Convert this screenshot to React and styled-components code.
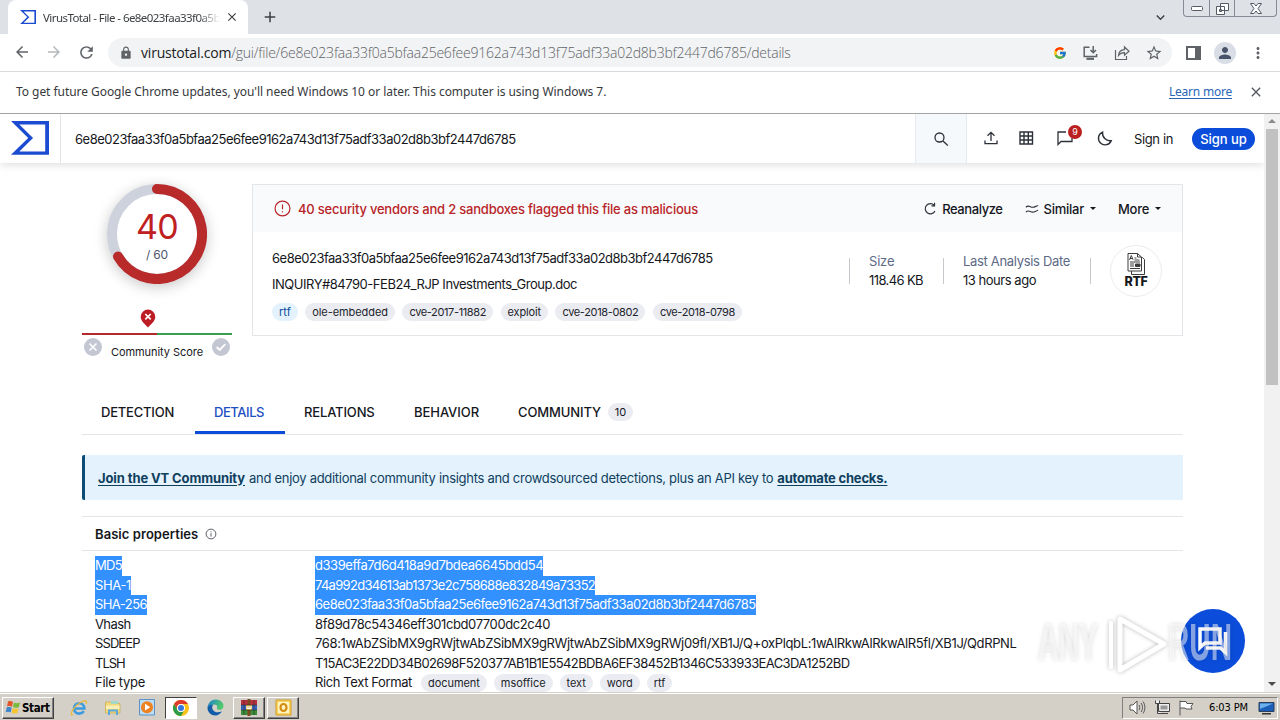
import styled, { createGlobalStyle } from 'styled-components';
import {
  MdArrowBack,
  MdArrowForward,
  MdRefresh,
  MdLock,
  MdStarBorder,
  MdPerson,
  MdMoreVert,
  MdClose,
  MdAdd,
  MdKeyboardArrowDown,
} from 'react-icons/md';
import { FcGoogle } from 'react-icons/fc';

const GlobalStyle = createGlobalStyle`
  * {
    box-sizing: border-box;
  }
  body {
    margin: 0;
    overflow: hidden;
    font-family: 'Inter', 'Liberation Sans', sans-serif;
    color: #15171c;
  }
  svg {
    display: block;
    flex: none;
  }
`;

const Screen = styled.div`
  position: relative;
  width: 1280px;
  height: 720px;
  display: flex;
  flex-direction: column;
  overflow: hidden;
  background: #fff;
`;

/* Any run of text; $ls tightens the tracking */
const Text = styled.span`
  white-space: nowrap;
  font-size: ${(p) => p.$size || 13}px;
  font-weight: ${(p) => p.$weight || 400};
  letter-spacing: ${(p) => p.$ls || 0}px;
  color: ${(p) => p.$color || 'inherit'};
`;

/* ---------- browser chrome ---------- */

const TabStrip = styled.div`
  height: 34px;
  flex: none;
  display: flex;
  align-items: flex-end;
  background: #dee1e6;
  font-family: 'Noto Sans', sans-serif;
  color: #3c4043;
`;

const BrowserTab = styled.div`
  width: 240px;
  height: 34px;
  margin-left: 8px;
  padding: 0 8px 0 12px;
  display: flex;
  align-items: center;
  background: #fff;
  border-radius: 8px 8px 0 0;
`;

const TabTitle = styled.div`
  width: 177px;
  margin: 0 5px 0 7px;
  font-size: 11.5px;
  letter-spacing: -0.56px;
  white-space: nowrap;
  mask-image: linear-gradient(90deg, #000 88%, transparent);
`;

const NewTab = styled.div`
  height: 34px;
  margin-left: 13px;
  flex: 1;
  display: flex;
  align-items: center;
`;

const TabSearch = styled.div`
  height: 34px;
  margin-right: 14px;
  display: flex;
  align-items: center;
`;

const WindowButtons = styled.div`
  align-self: flex-start;
  height: 17px;
  margin-right: 3px;
  display: flex;
  border: 1px solid #858a94;
  border-top: none;
  border-radius: 0 0 4px 4px;
`;

const WindowButton = styled.div`
  width: ${(p) => p.$w}px;
  display: flex;
  align-items: center;
  justify-content: center;
  border-left: ${(p) => (p.$first ? 'none' : '1px solid #858a94')};
`;

const Toolbar = styled.div`
  height: 38px;
  flex: none;
  display: flex;
  align-items: center;
  padding: 0 13px;
  border-bottom: 1px solid #d8dadd;
  color: #5f6368;
`;

const NavIcons = styled.div`
  width: 95px;
  display: flex;
  gap: 14px;
`;

const Omnibox = styled.div`
  width: 1064px;
  height: 29px;
  padding: 0 9px 0 11px;
  display: flex;
  align-items: center;
  background: #f1f3f4;
  border-radius: 15px;
  font-family: 'Open Sans', sans-serif;
`;

const Url = styled.div`
  flex: 1;
  margin-left: 8px;
  display: flex;
`;

const OmniActions = styled.div`
  display: flex;
  align-items: center;
  gap: 14px;
`;

const ToolbarActions = styled.div`
  flex: 1;
  display: flex;
  align-items: center;
  justify-content: space-between;
  padding-left: 14px;
`;

const Avatar = styled.div`
  width: 22px;
  height: 22px;
  display: flex;
  align-items: center;
  justify-content: center;
  border-radius: 50%;
  background: #d9dde5;
  color: #47536b;
`;

const InfoBar = styled.div`
  height: 42px;
  flex: none;
  display: flex;
  align-items: center;
  padding: 0 16px 2px 16px;
  border-bottom: 1px solid #a3a3a3;
  font-family: 'Noto Sans', sans-serif;
  color: #37393d;
`;

const LearnMore = styled.a`
  margin: 0 16px 0 auto;
  font-size: 12px;
  letter-spacing: -0.22px;
  color: #2a66b8;
  text-decoration: underline;
  text-underline-offset: 2px;
`;

/* ---------- page ---------- */

const Viewport = styled.div`
  height: 578px;
  flex: none;
  display: flex;
`;

const Page = styled.div`
  width: 1264px;
  overflow: hidden;
`;

const Scrollbar = styled.div`
  width: 16px;
  padding: 4px 0 5px;
  display: flex;
  flex-direction: column;
  align-items: center;
  background: #f1f1f1;
`;

const Thumb = styled.div`
  width: 12px;
  height: 256px;
  margin-top: 5px;
  margin-bottom: auto;
  background: #c1c1c1;
`;

const Header = styled.div`
  height: 49px;
  display: flex;
  box-shadow: 0 2px 8px rgba(0, 0, 0, 0.13);
`;

const LogoBox = styled.div`
  width: 61px;
  padding: 7px 0 0 11px;
  border-right: 1px solid #e3e5ea;
`;

const SearchText = styled.div`
  width: 854px;
  padding-left: 14px;
  display: flex;
  align-items: center;
`;

const SearchButton = styled.div`
  width: 52px;
  display: flex;
  align-items: center;
  justify-content: center;
  padding-right: 1px;
  background: #f6f9fc;
  border: 1px solid #e6e9ed;
  border-width: 0 1px;
`;

const HeaderActions = styled.div`
  flex: 1;
  display: flex;
  align-items: center;
  padding-left: 16px;
`;

const IconGroup = styled.div`
  display: flex;
  gap: 19px;
  margin-right: 21px;
`;

const Notification = styled.div`
  position: relative;
  margin: 0 4px;
`;

const Badge = styled.span`
  position: absolute;
  left: 11px;
  top: -5px;
  width: 14px;
  height: 14px;
  border-radius: 50%;
  background: #b9201f;
  color: #fff;
  font-size: 9px;
  line-height: 14px;
  text-align: center;
`;

const SignUp = styled.div`
  width: 63px;
  height: 22px;
  margin-left: 19px;
  border-radius: 11px;
  background: #0b4dda;
  color: #fff;
  display: flex;
  align-items: center;
  justify-content: center;
`;

const Main = styled.div`
  width: 1101px;
  margin-left: 82px;
`;

const Summary = styled.div`
  height: 226px;
  padding-top: 21px;
  display: flex;
  gap: 20px;
`;

const ScoreColumn = styled.div`
  width: 150px;
  display: flex;
  flex-direction: column;
  align-items: center;
`;

const Gauge = styled.div`
  width: 100px;
  height: 100px;
  display: grid;
  place-items: center;
  border-radius: 50%;
  box-shadow: 0 3px 14px rgba(0, 0, 0, 0.22);
  & > * {
    grid-area: 1 / 1;
  }
`;

const GaugeLabel = styled.div`
  display: flex;
  flex-direction: column;
  align-items: center;
  color: #c0201f;
`;

const Pin = styled.div`
  margin: 25px 19px 0 0;
`;

const ScoreBar = styled.div`
  width: 150px;
  height: 2px;
  margin-top: 5px;
  background: linear-gradient(90deg, #b3282b 50%, #3a9e52 50%);
`;

const ScoreRow = styled.div`
  width: 150px;
  padding: 3px 2px 0;
  display: flex;
  justify-content: space-between;
  & > span {
    padding-top: 7px;
  }
`;

const Card = styled.div`
  width: 931px;
  height: 152px;
  border: 1px solid #e3e5e9;
`;

const CardHead = styled.div`
  height: 47px;
  padding: 0 21px;
  display: flex;
  align-items: center;
  background: #f8fafc;
`;

const Alert = styled.div`
  flex: 1;
  display: flex;
  align-items: center;
  gap: 7px;
  color: #b82528;
`;

const CardActions = styled.div`
  display: flex;
  gap: 22px;
`;

const CardAction = styled.div`
  display: flex;
  align-items: center;
  gap: 5px;
`;

const Caret = styled.i`
  margin-left: 1px;
  border: 3px solid transparent;
  border-top-color: #15171c;
  border-bottom: none;
`;

const CardBody = styled.div`
  display: flex;
  padding: 13px 20px 0 19px;
`;

const FileInfo = styled.div`
  width: 577px;
  & > span {
    display: block;
    height: 26px;
    line-height: 26px;
  }
`;

const Tags = styled.div`
  display: flex;
  align-items: center;
  gap: ${(p) => p.$gap || 7}px;
  margin-top: ${(p) => p.$top || 0}px;
  margin-left: ${(p) => p.$left || 0}px;
`;

const Tag = styled.span`
  height: 18px;
  padding: 0 7px;
  border-radius: 9px;
  background: ${(p) => (p.$blue ? '#e3f2fd' : '#ebecf2')};
  color: ${(p) => (p.$blue ? '#0b4d9a' : '#21242c')};
  font-size: 11px;
  line-height: 18px;
  letter-spacing: ${(p) => p.$ls || 0}px;
  white-space: nowrap;
`;

const Stat = styled.div`
  width: ${(p) => p.$w}px;
  height: 26px;
  margin-top: 13px;
  padding-left: 19px;
  display: flex;
  flex-direction: column;
  justify-content: center;
  border-left: 1px solid #c6c8ce;
  line-height: 19px;
  & > span:first-child {
    color: #5d6a86;
  }
`;

const FileBadge = styled.div`
  width: 52px;
  height: 52px;
  display: flex;
  flex-direction: column;
  align-items: center;
  padding-top: 7px;
  border: 1px solid #ededf0;
  border-radius: 50%;
  font-size: 12.5px;
  font-weight: 800;
  line-height: 14px;
  letter-spacing: -0.3px;
`;

const Tabs = styled.div`
  height: 46px;
  display: flex;
  border-bottom: 1px solid #e3e5e9;
`;

const Tab = styled.div`
  width: ${(p) => p.$w}px;
  padding: 3px 0 0 19px;
  display: flex;
  align-items: center;
  color: ${(p) => (p.$active ? '#1d4fc4' : 'inherit')};
  border-bottom: 3px solid ${(p) => (p.$active ? '#0b4dda' : 'transparent')};
`;

const Count = styled.span`
  width: 25px;
  height: 18px;
  margin-left: 7px;
  border-radius: 9px;
  background: #ebecf2;
  font-size: 11px;
  line-height: 18px;
  text-align: center;
`;

const Banner = styled.div`
  height: 45px;
  margin-top: 20px;
  padding-left: 13px;
  display: flex;
  align-items: center;
  gap: 4px;
  background: #e3f2fd;
  border-left: 3px solid #0b4d75;
  border-radius: 2px 0 0 2px;
  color: #103f5e;
`;

const BannerLink = styled.a`
  font-size: 13px;
  font-weight: 700;
  letter-spacing: ${(p) => p.$ls}px;
  white-space: nowrap;
  text-decoration: underline;
  text-underline-offset: 2px;
`;

const SectionTitle = styled.div`
  height: 35px;
  margin-top: 16px;
  padding-left: 13px;
  display: flex;
  align-items: center;
  gap: 7px;
  border: 1px solid #e3e5e9;
  border-width: 1px 0;
`;

const Properties = styled.div`
  padding: 5px 0 0 13px;
`;

const Row = styled.div`
  height: 19.5px;
  display: grid;
  grid-template-columns: 220px 1fr;
  align-items: center;
`;

const Cell = styled.div`
  display: flex;
  align-items: center;
`;

const Value = styled(Text)`
  line-height: 19.5px;
  background: ${(p) => (p.$selected ? '#3390ff' : 'none')};
  color: ${(p) => (p.$selected ? '#fff' : 'inherit')};
`;

/* ---------- overlays ---------- */

const ChatButton = styled.div`
  position: absolute;
  left: 1181px;
  top: 609px;
  width: 64px;
  height: 64px;
  display: grid;
  place-items: center;
  border-radius: 50%;
  background: #0b4dda;
`;

const Watermark = styled.div`
  position: absolute;
  left: 1030px;
  top: 600px;
  filter: drop-shadow(0 0 2px rgba(0, 0, 0, 0.28));
`;

/* ---------- taskbar ---------- */

const Taskbar = styled.div`
  height: 28px;
  flex: none;
  display: flex;
  align-items: center;
  padding: 2px 2px 0;
  background: #d4d0c8;
  border-top: 1px solid #d4d0c8;
  box-shadow: inset 0 1px #fff;
`;

const StartButton = styled.div`
  width: 52px;
  height: 22px;
  padding-left: 2px;
  display: flex;
  align-items: center;
  gap: 1px;
  border: 1px solid;
  border-color: #fff #404040 #404040 #fff;
  box-shadow: inset -1px -1px #808080;
  font: 700 11.5px 'DejaVu Sans Condensed', 'DejaVu Sans', sans-serif;
  letter-spacing: -0.35px;
  color: #000;
`;

const QuickLaunch = styled.div`
  display: flex;
  gap: 2px;
  margin-left: 9px;
`;

const TaskButton = styled.div`
  width: 32px;
  height: 22px;
  display: grid;
  place-items: center;
  border: 1px solid;
  border-color: ${(p) =>
    p.$pressed ? '#404040 #fff #fff #404040' : p.$raised ? '#fff #404040 #404040 #fff' : 'transparent'};
  box-shadow: ${(p) => (p.$raised ? 'inset -1px -1px #808080' : 'none')};
  background: ${(p) => (p.$pressed ? '#fff' : 'none')};
`;

const Tray = styled.div`
  width: 156px;
  height: 22px;
  margin-left: auto;
  padding: 0 2px 0 6px;
  display: flex;
  align-items: center;
  gap: 8px;
  border: 1px solid;
  border-color: #808080 #fff #fff #808080;
  color: #000;
`;

const Clock = styled.span`
  margin: 0 2px 0 auto;
  font: 11px 'DejaVu Sans Condensed', 'DejaVu Sans', sans-serif;
  letter-spacing: -0.12px;
`;

/* ---------- icons ---------- */

const VtLogo = ({ width }) => (
  <svg width={width} height={width * 0.89} viewBox="0 1.32 24 21.36" fill="#1a4bd0">
    <path d="M10.87 12L0 22.68h24V1.32H0zm10.73 8.52H5.28l8.637-8.448L5.28 3.48H21.6z" />
  </svg>
);

const Stroke = ({ size = 16, w = 1.3, color = '#2d3139', children }) => (
  <svg width={size} height={size} viewBox="0 0 16 16" fill="none" stroke={color} strokeWidth={w}>
    {children}
  </svg>
);

const InstallIcon = () => (
  <svg width="18" height="18" viewBox="0 0 18 18" fill="none" stroke="#5f6368" strokeWidth="1.5">
    <path d="M8.500 3.200H3.200v9.300h12.400V10M12.200 2v6.500M9.500 6l2.700 2.700L15 6" />
    <path d="M5.500 14.800h7.500" strokeWidth="2.200" />
  </svg>
);

const ShareIcon = () => (
  <svg width="18" height="18" viewBox="0 0 18 18" fill="none" stroke="#5f6368" strokeWidth="1.2">
    <path d="M2.5 6v9.5h11V12M5.5 11.5c.3-4 2.6-5.7 6-5.8V3l4.5 4.2-4.5 4V8.700c-2.800-.1-4.500.7-6 2.800z" />
  </svg>
);

const Winrar = () => (
  <svg width="18" height="17" viewBox="0 0 18 17">
    <path fill="#b8303f" d="M1 1h16v5H1z" />
    <path fill="#3a63b5" d="M1 6h16v5H1z" />
    <path fill="#3d8b3b" d="M1 11h16v5H1z" />
    <path fill="#7b4a23" d="M7.500 0h3v17h-3z" />
    <path fill="#d9b24c" d="M6 6h6v5H6z" />
    <path stroke="#fff" fill="none" d="M7 7v2.500h4V7M9 7v2.500" />
    <path stroke="#222" strokeWidth=".8" d="M1 6h16M1 11h16M4 1v15M14 1v15" opacity=".6" />
  </svg>
);

const ChromeLogo = () => (
  <svg width="16" height="16" viewBox="0 0 16 16">
    <circle cx="8" cy="8" r="8" fill="#f9c31b" />
    <path fill="#de3b2f" d="M1.070 4A8 8 0 0 1 14.930 4L8 4A4 4 0 0 0 4.500 10z" />
    <path fill="#2c9c4a" d="M1.070 4A8 8 0 0 0 8 16L11.500 10A4 4 0 0 1 4.540 10z" />
    <circle cx="8" cy="8" r="4" fill="#fff" />
    <circle cx="8" cy="8" r="3" fill="#3576e0" />
  </svg>
);

const EdgeLogo = () => (
  <svg width="17" height="17" viewBox="0 0 17 17">
    <defs>
      <linearGradient id="edge" x1="0" y1="0" x2="1" y2=".3">
        <stop offset="0" stopColor="#1a7fd0" />
        <stop offset="1" stopColor="#52c96b" />
      </linearGradient>
    </defs>
    <path
      fill="url(#edge)"
      d="M.5 8.500C1 4 4.500.500 8.700.500c4.500 0 7.800 3 7.800 6.400 0 2.400-1.800 3.900-4 3.900-2 0-3-.7-2.600-1.500.8-1.500.2-3.700-2.400-3.800C4 5.400 1.500 7 .5 8.500z"
    />
    <path fill="#135ca8" d="M.5 8.500C1.500 6.500 3.500 5.300 6.500 5.400 5 6.500 4.700 9 6 11c1.800 2.700 5.600 3 8.900 1.300C13.500 15 11 16.500 8.400 16.500 4 16.500.3 13 .5 8.500z" />
  </svg>
);

const IeLogo = () => (
  <svg width="18" height="18" viewBox="0 0 18 18" fill="none">
    <path stroke="#3c9be0" strokeWidth="2.600" d="M4 9.500h10.300C14.300 6 12 4.300 9.300 4.300 6.300 4.300 4 6.500 4 9.600c0 3 2.300 5 5.200 5 2 0 3.700-.9 4.600-2.400" />
    <path stroke="#e6b93a" strokeWidth="1.300" d="M3 15.500C.5 17 .5 14 3.500 9.800 7 5 13 1.200 15.800 2c1 .3.900 1.700.2 3" />
  </svg>
);

const FolderLogo = () => (
  <svg width="18" height="17" viewBox="0 0 18 17">
    <path fill="#f2d87c" stroke="#c9a94a" strokeWidth=".7" d="M1.500 3h5l1 1.500h8.500V14h-14.500z" />
    <path fill="#a5d8c8" d="M7 2h7v3H7z" />
    <path fill="#fbeeb4" d="M2 6.500h13.500V10H2z" />
    <path fill="none" stroke="#5aa7dc" strokeWidth="2" d="M5 16v-4.500h8V16" />
  </svg>
);

const PlayerLogo = () => (
  <svg width="16" height="17" viewBox="0 0 16 17">
    <path fill="#bddcf3" stroke="#5b92c7" d="M.500.500h15v15.500H.500z" />
    <circle cx="8" cy="8.200" r="6" fill="#ee8120" />
    <path fill="#fff" d="M6 4.800l5.200 3.400L6 11.600z" />
  </svg>
);

const OutlookLogo = () => (
  <svg width="17" height="17" viewBox="0 0 17 17">
    <path fill="#f8d560" stroke="#d39a1f" d="M1 1h15v15H1z" />
    <path fill="#fff3c4" d="M3 3h11v11H3z" />
    <ellipse cx="8.500" cy="8.500" rx="3" ry="3.500" fill="none" stroke="#d48c10" strokeWidth="2.200" />
  </svg>
);

const WindowsLogo = () => (
  <svg width="16" height="15" viewBox="0 0 16 15">
    <path fill="#e2562a" d="M3 1.500C5 .6 6.500 1 8 2L7 6.800C5.400 5.800 4 5.700 2 6.400z" />
    <path fill="#79b93c" d="M9 2.400c1.800 1 3.500 1 6 0L13.800 7.200c-2 .8-4 .7-5.800-.2z" />
    <path fill="#3d86cf" d="M1.700 7.500c2-.8 3.500-.6 5 .3L5.700 12.500c-1.500-1-3-1.100-5-.3z" />
    <path fill="#f5c431" d="M7.700 8.100c1.800 1 3.700 1 5.800.2l-1.200 4.700c-2 .8-3.900.7-5.700-.3z" />
  </svg>
);

const RtfIcon = () => (
  <svg width="18" height="22" viewBox="0 0 18 22" fill="#fff" stroke="#3c3c3c" strokeWidth="1">
    <path d="M4.500 4.500h11l2 2V21.500h-13z" />
    <path d="M1 .500h9.500l4 3.500V18H1z" />
    <path d="M10.500.500V4h4M2.500 6.800L4.300 2.500l1.800 4.300M3 5.500h2.600M7.500 5h2M7.500 7h5M3 9h10M3 11h4M3 13h4M3 15.500h10" fill="none" />
    <path d="M8.500 11h4.500v2.500H8.500z" fill="#3c3c3c" />
  </svg>
);

const rows = [
  { label: 'MD5', value: 'd339effa7d6d418a9d7bdea6645bdd54', ls: -0.44, labelLs: -0.7, selected: true },
  { label: 'SHA-1', value: '74a992d34613ab1373e2c758688e832849a73352', ls: -0.7, labelLs: -0.35, selected: true },
  {
    label: 'SHA-256',
    value: '6e8e023faa33f0a5bfaa25e6fee9162a743d13f75adf33a02d8b3bf2447d6785',
    ls: -0.5,
    labelLs: -0.57,
    selected: true,
  },
  { label: 'Vhash', value: '8f89d78c54346eff301cbd07700dc2c40', ls: -0.4, labelLs: -0.6 },
  {
    label: 'SSDEEP',
    value:
      '768:1wAbZSibMX9gRWjtwAbZSibMX9gRWjtwAbZSibMX9gRWj09fl/XB1J/Q+oxPlqbL:1wAlRkwAlRkwAlR5fl/XB1J/QdRPNL',
    ls: -0.37,
    labelLs: -0.9,
  },
  {
    label: 'TLSH',
    value: 'T15AC3E22DD34B02698F520377AB1B1E5542BDBA6EF38452B1346C533933EAC3DA1252BD',
    ls: -0.61,
    labelLs: -1,
  },
  {
    label: 'File type',
    value: 'Rich Text Format',
    ls: -0.39,
    labelLs: -0.28,
    tags: ['document', 'msoffice', 'text', 'word', 'rtf'],
  },
];

const hash = '6e8e023faa33f0a5bfaa25e6fee9162a743d13f75adf33a02d8b3bf2447d6785';

const Browser = () => (
  <>
    <TabStrip>
      <BrowserTab>
        <VtLogo width={16} />
        <TabTitle>VirusTotal - File - 6e8e023faa33f0a5b</TabTitle>
        <MdClose size={14} />
      </BrowserTab>
      <NewTab>
        <MdAdd size={18} />
      </NewTab>
      <TabSearch>
        <MdKeyboardArrowDown size={17} />
      </TabSearch>
      <WindowButtons>
        <WindowButton $w={25} $first>
          <svg width="12" height="6" viewBox="0 0 12 6">
            <rect x=".5" y="1.500" width="11" height="4" rx="1" fill="#fff" stroke="#555b66" />
          </svg>
        </WindowButton>
        <WindowButton $w={25}>
          <svg width="13" height="13" viewBox="0 0 13 13" fill="#fff" stroke="#555b66">
            <path d="M4.500 1.500h8v7h-8zM.500 4.500h8v8h-8zM3.500 7.500h2v2h-2z" />
          </svg>
        </WindowButton>
        <WindowButton $w={42}>
          <svg width="12" height="11" viewBox="0 0 12 11" fill="#fff" stroke="#555b66">
            <path d="M.500.500h3.500L6 3 8 .500h3.500L8 5.500l3.500 5H8L6 8l-2 2.500H.500L4 5.500z" />
          </svg>
        </WindowButton>
      </WindowButtons>
    </TabStrip>

    <Toolbar>
      <NavIcons>
        <MdArrowBack size={18} />
        <MdArrowForward size={18} color="#b5b8bb" />
        <MdRefresh size={19} />
      </NavIcons>
      <Omnibox>
        <MdLock size={14} />
        <Url>
          <Text $size={14} $ls={-0.2} $color="#202124">
            virustotal.com
          </Text>
          <Text $size={14} $weight={300} $ls={-0.23}>
            /gui/file/{hash}/details
          </Text>
        </Url>
        <OmniActions>
          <FcGoogle size={14} />
          <InstallIcon />
          <ShareIcon />
          <MdStarBorder size={18} />
        </OmniActions>
      </Omnibox>
      <ToolbarActions>
        <svg width="15" height="14" viewBox="0 0 15 14">
          <path fill="none" stroke="#5f6368" strokeWidth="2" d="M1 1h13v12H1z" />
          <path fill="#5f6368" d="M9 1h5v12H9z" />
        </svg>
        <Avatar>
          <MdPerson size={18} />
        </Avatar>
        <MdMoreVert size={18} />
      </ToolbarActions>
    </Toolbar>

    <InfoBar>
      <Text $size={12} $ls={-0.05}>
        To get future Google Chrome updates, you'll need Windows 10 or later. This computer is using Windows 7.
      </Text>
      <LearnMore>Learn more</LearnMore>
      <MdClose size={16} color="#55585c" />
    </InfoBar>
  </>
);

const PageHeader = () => (
  <Header>
    <LogoBox>
      <VtLogo width={38} />
    </LogoBox>
    <SearchText>
      <Text $ls={-0.5}>{hash}</Text>
    </SearchText>
    <SearchButton>
      <Stroke>
        <circle cx="6.500" cy="6.500" r="4.500" />
        <path d="M10 10l4.800 4.500" />
      </Stroke>
    </SearchButton>
    <HeaderActions>
      <IconGroup>
        <Stroke>
          <path d="M8 11V2.500M4.500 5.800L8 2.300l3.500 3.500M2 10.500v3.200h12v-3.200" />
        </Stroke>
        <Stroke w={1.4}>
          <path d="M2 2h12.500v12H2zM6 2v12M10.300 2v12M2 6h12.500M2 10h12.500" />
        </Stroke>
        <Notification>
          <Stroke>
            <path d="M9 2H1v12.500l3-3h11V8" />
          </Stroke>
          <Badge>9</Badge>
        </Notification>
        <Stroke size={17}>
          <path d="M6.200 2A6.200 6.200 0 1 0 14.300 10 7 7 0 0 1 6.200 2z" />
        </Stroke>
      </IconGroup>
      <Text $ls={-0.38}>Sign in</Text>
      <SignUp>
        <Text $weight={500} $ls={-0.05}>
          Sign up
        </Text>
      </SignUp>
    </HeaderActions>
  </Header>
);

const Score = () => (
  <ScoreColumn>
    <Gauge>
      <svg width="100" height="100" viewBox="0 0 100 100" fill="none" strokeWidth="10">
        <circle cx="50" cy="50" r="45" fill="#fff" stroke="#ced2dc" />
        <path d="M50 5a45 45 0 1 1 -38.970 67.500" stroke="#b92a2b" strokeLinecap="round" />
      </svg>
      <GaugeLabel>
        <Text $size={34} $ls={-0.7}>
          40
        </Text>
        <Text $size={12} $ls={-0.18} $color="#4d586e">
          / 60
        </Text>
      </GaugeLabel>
    </Gauge>
    <Pin>
      <svg width="16" height="19" viewBox="0 0 16 19">
        <path fill="#bd1c24" d="M8 .5a7.300 7.300 0 0 1 7.300 7.300C15.300 12 11 15.500 8 18.500 5 15.500.700 12 .700 7.800A7.300 7.300 0 0 1 8 .500z" />
        <path stroke="#fff" strokeWidth="1.700" d="M5.300 5l5.400 5.400M10.700 5l-5.400 5.400" />
      </svg>
    </Pin>
    <ScoreBar />
    <ScoreRow>
      <svg width="18" height="18" viewBox="0 0 18 18">
        <circle cx="9" cy="9" r="9" fill="#c3c7d3" />
        <path stroke="#fff" strokeWidth="1.600" d="M5.500 5.500l7 7M12.500 5.500l-7 7" />
      </svg>
      <Text $size={11} $ls={-0.06}>
        Community Score
      </Text>
      <svg width="18" height="18" viewBox="0 0 18 18">
        <circle cx="9" cy="9" r="9" fill="#c3c7d3" />
        <path fill="none" stroke="#fff" strokeWidth="1.800" d="M4.700 9l3 3 5.600-5.800" />
      </svg>
    </ScoreRow>
  </ScoreColumn>
);

const FileCard = () => (
  <Card>
    <CardHead>
      <Alert>
        <Stroke size={17} w={1.1} color="#b82528">
          <circle cx="8" cy="8" r="7" />
          <path d="M8 4.200v4.600M8 10.500v1.300" />
        </Stroke>
        <Text $weight={500} $ls={-0.21}>
          40 security vendors and 2 sandboxes flagged this file as malicious
        </Text>
      </Alert>
      <CardActions>
        <CardAction>
          <Stroke size={13} w={1.4}>
            <path d="M12.500 4A6.300 6.300 0 1 0 13.500 11M13 1v3.800H9.200" />
          </Stroke>
          <Text $weight={500} $ls={-0.42}>
            Reanalyze
          </Text>
        </CardAction>
        <CardAction>
          <Stroke size={14} w={1.3}>
            <path d="M1 6c3-3 5 0 7.500 0S12 5 15 4M1 11.500c3-3 5 0 7.500 0S12 10.500 15 9.500" />
          </Stroke>
          <Text $weight={500} $ls={-0.25}>
            Similar
          </Text>
          <Caret />
        </CardAction>
        <CardAction>
          <Text $weight={500} $ls={-0.28}>
            More
          </Text>
          <Caret />
        </CardAction>
      </CardActions>
    </CardHead>
    <CardBody>
      <FileInfo>
        <Text $ls={-0.5}>{hash}</Text>
        <Text $ls={-0.47}>INQUIRY#84790-FEB24_RJP Investments_Group.doc</Text>
        <Tags $top={6} $gap={7.5}>
          <Tag $blue>rtf</Tag>
          <Tag $ls={-0.07}>ole-embedded</Tag>
          <Tag $ls={-0.37}>cve-2017-11882</Tag>
          <Tag $ls={-0.15}>exploit</Tag>
          <Tag $ls={-0.35}>cve-2018-0802</Tag>
          <Tag $ls={-0.35}>cve-2018-0798</Tag>
        </Tags>
      </FileInfo>
      <Stat $w={94}>
        <Text $ls={-0.2}>Size</Text>
        <Text $ls={-0.6}>118.46 KB</Text>
      </Stat>
      <Stat $w={147}>
        <Text $ls={-0.32}>Last Analysis Date</Text>
        <Text $ls={-0.47}>13 hours ago</Text>
      </Stat>
      <Stat $w={20} />
      <FileBadge>
        <RtfIcon />
        RTF
      </FileBadge>
    </CardBody>
  </Card>
);

const Details = () => (
  <>
    <Tabs>
      <Tab $w={113}>
        <Text $weight={500} $ls={-0.21}>
          DETECTION
        </Text>
      </Tab>
      <Tab $w={90} $active>
        <Text $weight={500} $ls={-0.44}>
          DETAILS
        </Text>
      </Tab>
      <Tab $w={110}>
        <Text $weight={500} $ls={-0.15}>
          RELATIONS
        </Text>
      </Tab>
      <Tab $w={104}>
        <Text $weight={500} $ls={-0.06}>
          BEHAVIOR
        </Text>
      </Tab>
      <Tab $w={140}>
        <Text $weight={500} $ls={-0.11}>
          COMMUNITY
        </Text>
        <Count>10</Count>
      </Tab>
    </Tabs>
    <Banner>
      <BannerLink $ls={-0.11}>Join the VT Community</BannerLink>
      <Text $ls={-0.29}>
        and enjoy additional community insights and crowdsourced detections, plus an API key to
      </Text>
      <BannerLink $ls={-0.21}>automate checks.</BannerLink>
    </Banner>
    <SectionTitle>
      <Text $weight={600} $ls={0.06}>
        Basic properties
      </Text>
      <Stroke size={12} w={1.2} color="#4a4e57">
        <circle cx="8" cy="8" r="6.500" />
        <path d="M8 7v4.500M8 4.500v1.300" />
      </Stroke>
    </SectionTitle>
    <Properties>
      {rows.map((r) => (
        <Row key={r.label}>
          <Cell>
            <Value $ls={r.labelLs} $selected={r.selected}>
              {r.label}
            </Value>
          </Cell>
          <Cell>
            <Value $ls={r.ls} $selected={r.selected}>
              {r.value}
            </Value>
            {r.tags && (
              <Tags $left={9}>
                {r.tags.map((t) => (
                  <Tag key={t} $ls={-0.05}>
                    {t}
                  </Tag>
                ))}
              </Tags>
            )}
          </Cell>
        </Row>
      ))}
    </Properties>
  </>
);

const Bottom = () => (
  <Taskbar>
    <StartButton>
      <WindowsLogo />
      Start
    </StartButton>
    <QuickLaunch>
      <TaskButton>
        <IeLogo />
      </TaskButton>
      <TaskButton>
        <FolderLogo />
      </TaskButton>
      <TaskButton>
        <PlayerLogo />
      </TaskButton>
      <TaskButton $pressed>
        <ChromeLogo />
      </TaskButton>
      <TaskButton>
        <EdgeLogo />
      </TaskButton>
      <TaskButton $raised>
        <Winrar />
      </TaskButton>
      <TaskButton $raised>
        <OutlookLogo />
      </TaskButton>
    </QuickLaunch>
    <Tray>
      <svg width="17" height="15" viewBox="0 0 17 15" fill="#fff" stroke="#555">
        <path d="M1 5h3l4-4v13l-4-4H1z" />
        <path d="M10 5c1 1.500 1 3.500 0 5M12 3c2 2.500 2 6.500 0 9M14 1.500c2.500 3.500 2.500 8.500 0 12" fill="none" />
      </svg>
      <svg width="16" height="15" viewBox="0 0 16 15" fill="#eee" stroke="#444">
        <path d="M4.500 3.500h11v8h-11zM7 13.500h7M1.500.500v3h4v-3M3.500 3.500v10h4" />
        <path d="M6.500 5.500h7v4h-7z" fill="#999" stroke="none" />
      </svg>
      <svg width="16" height="16" viewBox="0 0 16 16" fill="#fff" stroke="#555">
        <path d="M2 15.500V.500M2 1.500h6l1 2h6l-2 3 1 2.500H8L7 8H2" />
      </svg>
      <Clock>6:03 PM</Clock>
      <svg width="17" height="14" viewBox="0 0 17 14">
        <path fill="#1c5fb8" stroke="#2b3f5c" d="M1 1.500h15v9H1z" />
        <path fill="#6fb1ec" d="M2 2.500h13L2 8z" />
        <path fill="#333" d="M4 12h9v1.500H4z" />
      </svg>
    </Tray>
  </Taskbar>
);

export default function App() {
  return (
    <Screen>
      <GlobalStyle />
      <Browser />
      <Viewport>
        <Page>
          <PageHeader />
          <Main>
            <Summary>
              <Score />
              <FileCard />
            </Summary>
            <Details />
          </Main>
        </Page>
        <Scrollbar>
          <svg width="8" height="6" viewBox="0 0 8 6">
            <path fill="#8b8b8b" d="M0 5l4-4 4 4z" />
          </svg>
          <Thumb />
          <svg width="8" height="6" viewBox="0 0 8 6">
            <path fill="#4d4d4d" d="M0 1l4 4 4-4z" />
          </svg>
        </Scrollbar>
      </Viewport>
      <Bottom />
      <ChatButton>
        <svg width="32" height="32" viewBox="0 0 32 32" fill="none" stroke="#fff" strokeWidth="3.500">
          <path d="M3 4h20v14H8l-5 4.500z" />
          <path d="M28.500 7v20.500l-5-4.500H9" />
        </svg>
      </ChatButton>
      <Watermark>
        <svg width="210" height="84" viewBox="0 0 210 84">
          <g
            fontFamily="Liberation Sans, sans-serif"
            fontWeight="700"
            fontSize="52"
            fill="#fff"
            fillOpacity=".5"
          >
            <text x="8" y="60" textLength="60" lengthAdjust="spacingAndGlyphs">
              ANY
            </text>
            <text x="138" y="60" textLength="64" lengthAdjust="spacingAndGlyphs">
              RUN
            </text>
          </g>
          <g fill="none" stroke="#fff" strokeLinejoin="round" strokeLinecap="round">
            <path d="M90 19v51l44-26z" strokeWidth="5" />
            <path d="M81 23v44" strokeWidth="4" />
          </g>
        </svg>
      </Watermark>
    </Screen>
  );
}
